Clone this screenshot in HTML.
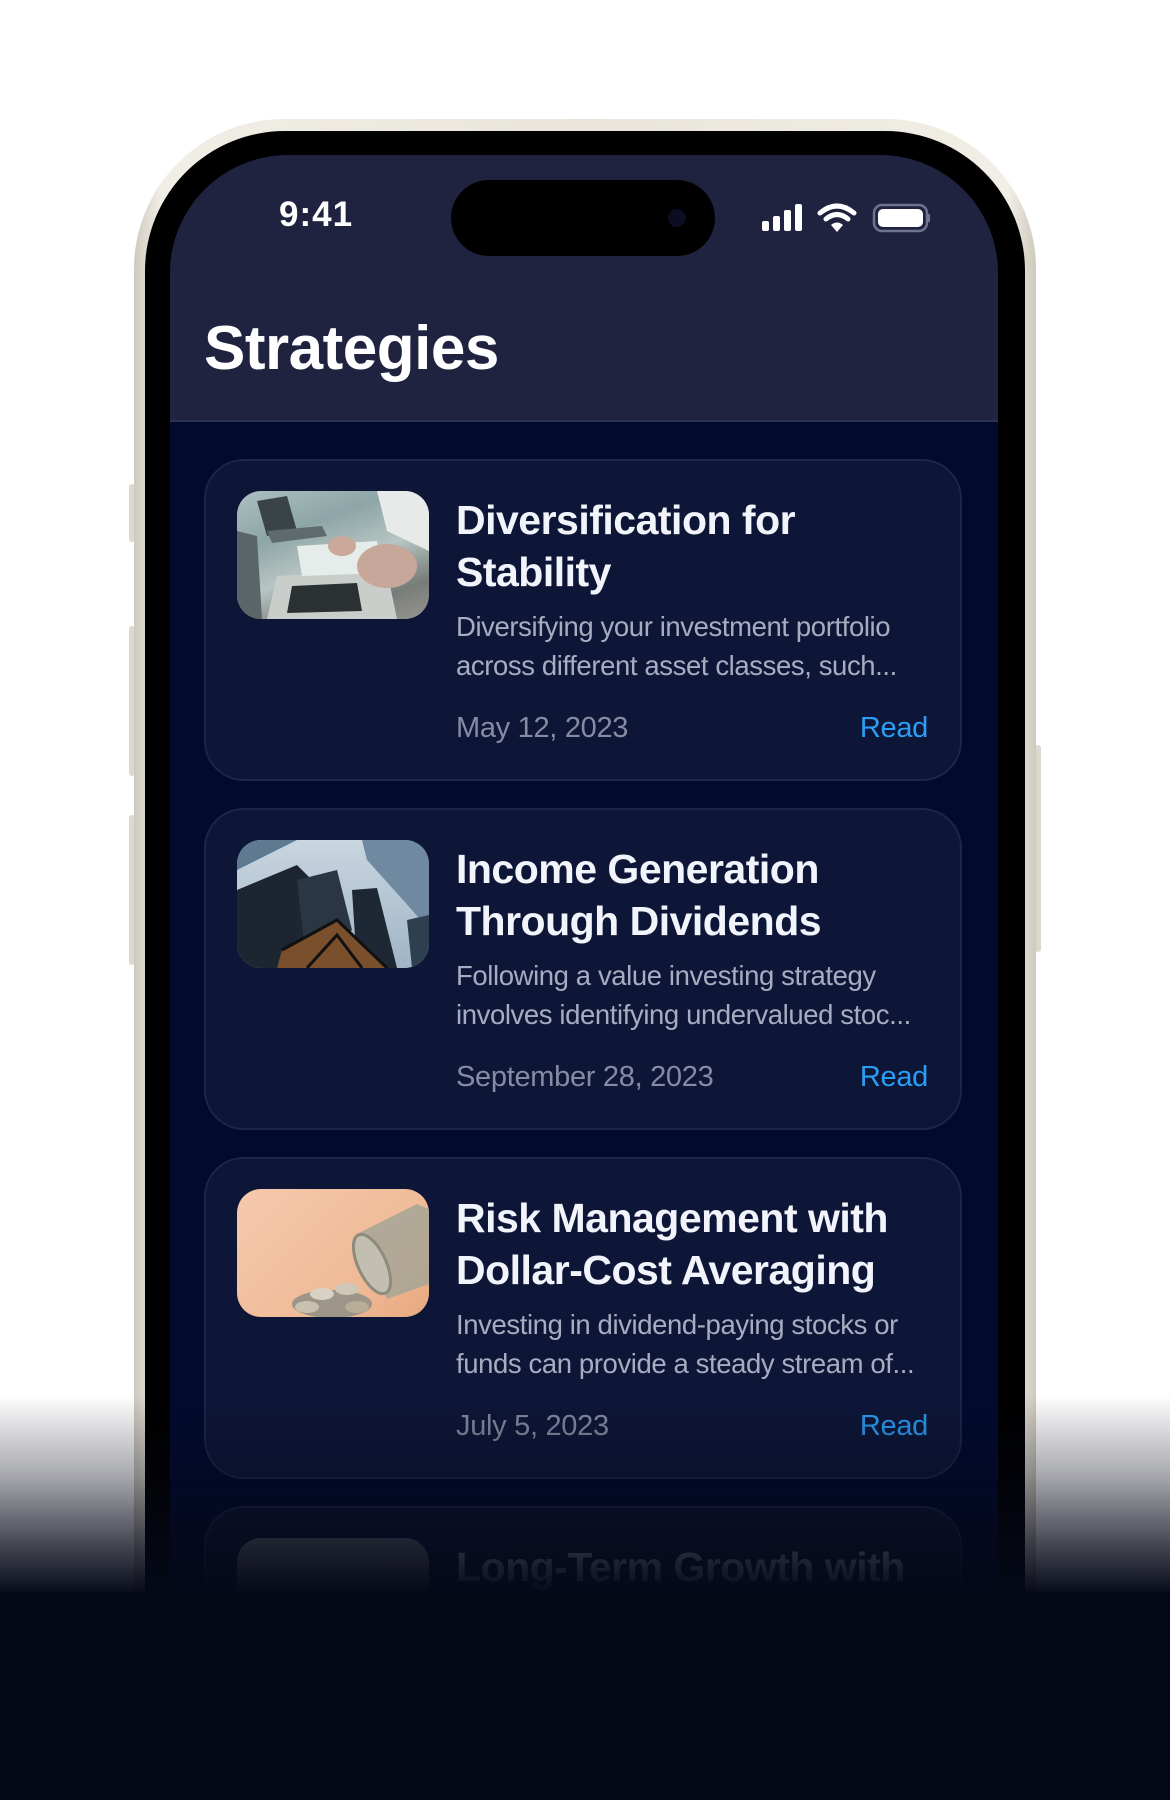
<!DOCTYPE html>
<html><head><meta charset="utf-8">
<style>
*{margin:0;padding:0;box-sizing:border-box}
html,body{width:1170px;height:1800px;overflow:hidden;background:#fff;font-family:"Liberation Sans",sans-serif;position:relative}
.abs{position:absolute}
.frame{left:134px;top:119px;width:902px;height:1681px;border-radius:150px 150px 0 0;background:linear-gradient(90deg,#cfcabd,#f1eee6 3%,#e9e5dc 50%,#f1eee6 97%,#cfcabd);}
.bezel{left:145px;top:131px;width:880px;height:1669px;border-radius:140px 140px 0 0;background:#000}
.screen{left:170px;top:155px;width:828px;height:1645px;border-radius:118px 118px 0 0;background:#020a2e;overflow:hidden}
.header{left:0;top:0;width:828px;height:267px;background:#1f2340;border-bottom:2px solid #2c3254}
.card{left:34px;width:758px;height:322px;border-radius:40px;background:#0e1638;border:2px solid #1d2648}
.img{left:31px;top:30px;width:192px;height:128px;border-radius:24px;overflow:hidden}
.t{left:250px;top:33px;color:#f2f4fb;font-weight:bold;font-size:41px;line-height:52px;letter-spacing:-0.5px;white-space:nowrap}
.d{left:250px;top:146px;color:#a7acc0;font-size:27.5px;line-height:39px;letter-spacing:-0.4px;white-space:nowrap}
.date{left:250px;top:251px;color:#868ba3;font-size:29px;letter-spacing:-0.3px}
.read{right:32px;top:251px;color:#2a9df4;font-size:29px;letter-spacing:-0.3px}
.btn{background:#ddd8cc;width:6px;border-radius:3px}
</style></head><body>
<div class="abs btn" style="left:129px;top:484px;height:58px"></div>
<div class="abs btn" style="left:129px;top:626px;height:150px"></div>
<div class="abs btn" style="left:129px;top:815px;height:150px"></div>
<div class="abs btn" style="left:1035px;top:745px;height:207px"></div>
<div class="abs frame"></div>
<div class="abs bezel"></div>
<div class="abs screen">
  <div class="abs header">
    <div class="abs" style="left:109px;top:40px;color:#fff;font-size:35px;font-weight:bold;letter-spacing:1px">9:41</div>
    <div class="abs" style="left:281px;top:25px;width:264px;height:76px;border-radius:38px;background:#000"></div>
    <div class="abs" style="left:498px;top:54px;width:18px;height:18px;border-radius:50%;background:#0b0d22"></div>
    <svg class="abs" style="left:590px;top:48px" width="170" height="32" viewBox="0 0 170 32">
      <rect x="2" y="18" width="7" height="10" rx="2" fill="#fff"/>
      <rect x="13" y="13" width="7" height="15" rx="2" fill="#fff"/>
      <rect x="24" y="7" width="7" height="21" rx="2" fill="#fff"/>
      <rect x="35" y="1" width="7" height="27" rx="2" fill="#fff"/>
      <path d="M60 10 Q77 -4 94 10" stroke="#fff" stroke-width="5" fill="none" stroke-linecap="round"/>
      <path d="M66 16 Q77 7 88 16" stroke="#fff" stroke-width="5" fill="none" stroke-linecap="round"/>
      <path d="M71 22 L77 29 L83 22 Q77 17 71 22Z" fill="#fff"/>
      <rect x="114" y="2" width="53" height="26" rx="8" fill="none" stroke="#6e7390" stroke-width="2.5"/>
      <rect x="118" y="6" width="45" height="18" rx="5" fill="#fff"/>
      <rect x="168" y="11" width="2.5" height="8" rx="1" fill="#6e7390"/>
    </svg>
    <div class="abs" style="left:34px;top:158px;color:#fff;font-size:62px;font-weight:bold;letter-spacing:-0.5px">Strategies</div>
  </div>

  <div class="abs card" style="top:304px">
    <div class="abs img" style="background:linear-gradient(160deg,#b9cccc 0%,#8ea6a8 30%,#c9d3d0 55%,#6e6a66 80%,#9a8f88 100%)">
      <svg width="192" height="128" viewBox="0 0 192 128">
        <rect x="0" y="0" width="192" height="128" fill="#8fa4a5" opacity=".3"/>
        <polygon points="20,10 50,5 60,40 30,45" fill="#3a4448"/>
        <polygon points="30,40 85,35 90,45 35,52" fill="#5e6a6c"/>
        <polygon points="0,40 20,45 25,128 0,128" fill="#5a6668"/>
        <polygon points="40,85 150,80 160,128 30,128" fill="#c9cecb"/>
        <polygon points="55,95 120,92 125,120 50,122" fill="#2b3033"/>
        <polygon points="60,55 140,50 145,82 65,85" fill="#e6ecea"/>
        <polygon points="140,0 192,0 192,60 150,40" fill="#e7eae9"/>
        <ellipse cx="150" cy="75" rx="30" ry="22" fill="#c7a79a"/>
        <ellipse cx="105" cy="55" rx="14" ry="10" fill="#caa89a"/>
      </svg>
    </div>
    <div class="abs t">Diversification for<br>Stability</div>
    <div class="abs d">Diversifying your investment portfolio<br>across different asset classes, such...</div>
    <div class="abs date">May 12, 2023</div>
    <div class="abs read">Read</div>
  </div>

  <div class="abs card" style="top:653px">
    <div class="abs img" style="background:linear-gradient(180deg,#c9d6e0,#9fb4c6)">
      <svg width="192" height="128" viewBox="0 0 192 128">
        <polygon points="0,0 60,0 0,30" fill="#5f7a90"/>
        <polygon points="0,50 60,25 80,45 90,128 0,128" fill="#1c2530"/>
        <polygon points="60,40 100,30 115,90 70,128" fill="#2a3644"/>
        <polygon points="115,50 140,48 160,128 120,128" fill="#1d2834"/>
        <polygon points="125,0 192,0 192,90 175,70 130,20" fill="#6f8aa0"/>
        <polygon points="170,80 192,75 192,128 175,128" fill="#2e4050"/>
        <polygon points="45,110 100,80 150,128 40,128" fill="#7a4f2c"/>
        <path d="M45 110 L100 80 L150 128 M70 128 L100 95 L125 128" stroke="#111" stroke-width="3" fill="none"/>
      </svg>
    </div>
    <div class="abs t">Income Generation<br>Through Dividends</div>
    <div class="abs d">Following a value investing strategy<br>involves identifying undervalued stoc...</div>
    <div class="abs date">September 28, 2023</div>
    <div class="abs read">Read</div>
  </div>

  <div class="abs card" style="top:1002px">
    <div class="abs img" style="background:linear-gradient(135deg,#f6c9ad,#efb995 70%,#e7a87f)">
      <svg width="192" height="128" viewBox="0 0 192 128">
        <polygon points="120,45 180,15 192,20 192,95 150,110" fill="#a7a496" opacity=".85"/>
        <ellipse cx="135" cy="75" rx="14" ry="32" transform="rotate(-25 135 75)" fill="#c3bfb0" stroke="#8e8a7c" stroke-width="3"/>
        <ellipse cx="95" cy="115" rx="40" ry="14" fill="#9d9587"/>
        <ellipse cx="85" cy="105" rx="12" ry="6" fill="#d8d2c4"/>
        <ellipse cx="110" cy="100" rx="12" ry="6" fill="#cfc8b8"/>
        <ellipse cx="70" cy="118" rx="12" ry="6" fill="#c9c1b0"/>
        <ellipse cx="120" cy="118" rx="12" ry="6" fill="#b8ad98"/>
      </svg>
    </div>
    <div class="abs t">Risk Management with<br>Dollar-Cost Averaging</div>
    <div class="abs d">Investing in dividend-paying stocks or<br>funds can provide a steady stream of...</div>
    <div class="abs date">July 5, 2023</div>
    <div class="abs read">Read</div>
  </div>

  <div class="abs card" style="top:1351px">
    <div class="abs img" style="background:#6a6e78"></div>
    <div class="abs t" style="color:#9aa0b8">Long-Term Growth with</div>
  </div>
</div>
<div class="abs" style="left:0;top:1395px;width:1170px;height:200px;background:linear-gradient(180deg,rgba(5,8,23,0) 0%,rgba(5,8,23,.35) 40%,rgba(5,8,23,.75) 75%,#050817 100%)"></div>
<div class="abs" style="left:0;top:1592px;width:1170px;height:208px;background:#050817"></div>
</body></html>
